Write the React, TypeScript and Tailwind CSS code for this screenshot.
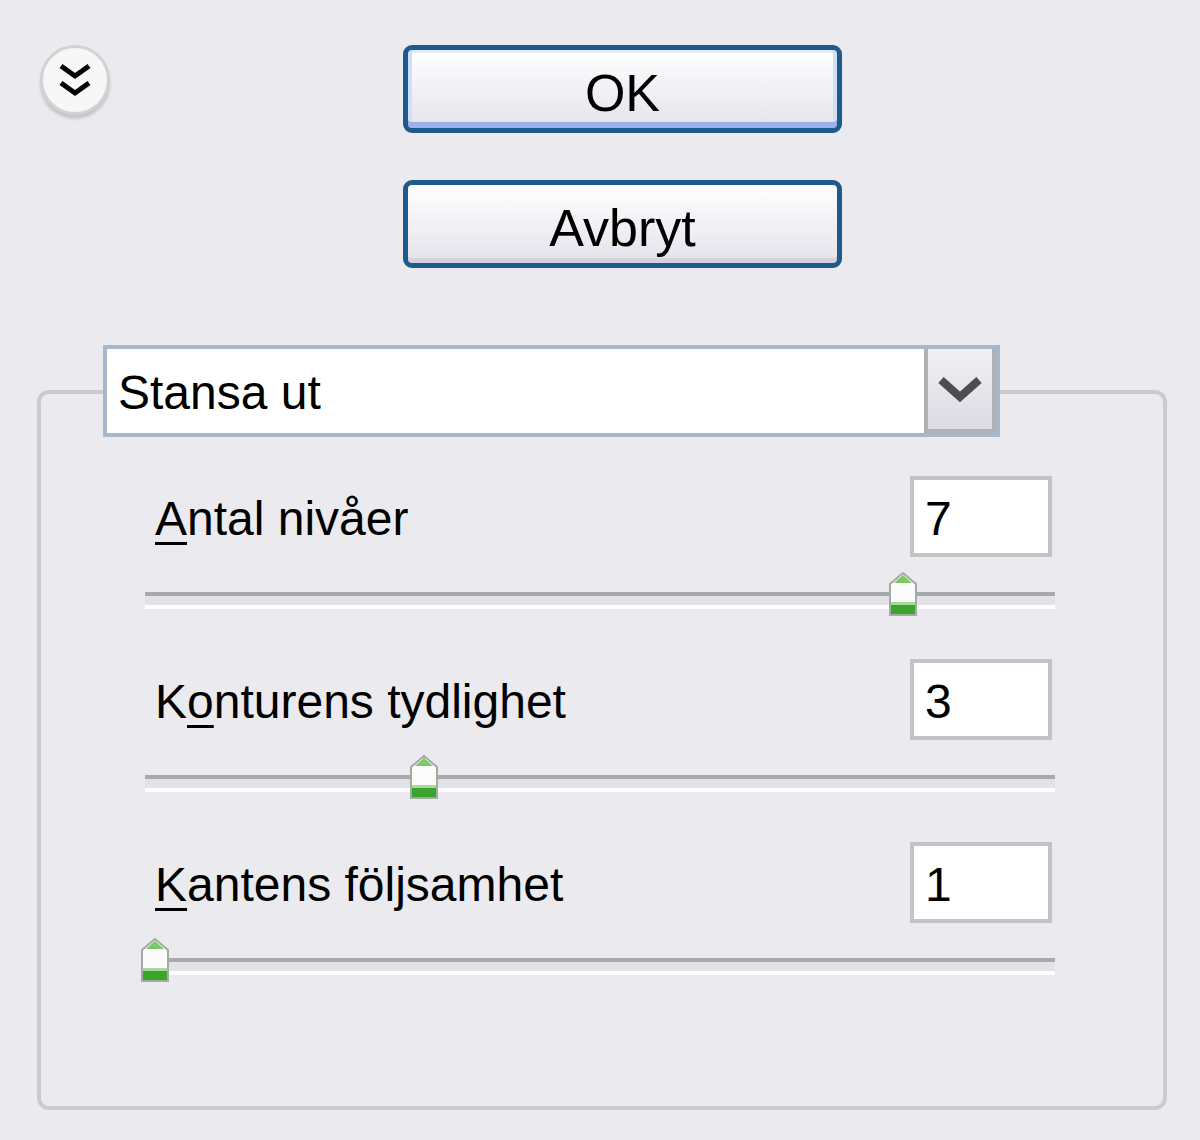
import React from "react";

type Row = {
  label: string;
  hot: number;
  value: number;
  frac: number;
};

const rows: Row[] = [
  { label: "Antal nivåer", hot: 0, value: 7, frac: 5 / 6 },
  { label: "Konturens tydlighet", hot: 1, value: 3, frac: 0.3 },
  { label: "Kantens följsamhet", hot: 0, value: 1, frac: 0 },
];

function Thumb() {
  return (
    <svg width="30" height="45" viewBox="0 0 30 45">
      <path d="M15 1 L28 12 V43 H2 V12 Z" fill="#fbfbfb" stroke="#a3aca3" strokeWidth="2" />
      <path d="M15 3 L24 11 H6 Z" fill="#7cc766" />
      <rect x="3" y="33" width="24" height="9" fill="#3aa52a" />
      <rect x="3" y="30" width="24" height="3" fill="#a6d99a" />
    </svg>
  );
}

function SliderRow({ row }: { row: Row }) {
  const { label, hot, value, frac } = row;
  return (
    <div className="h-[183px]">
      <div className="ml-[114px] w-[897px] h-[81px] flex justify-between">
        <span className="pt-[2px] leading-[81px] text-[48px] text-black">
          {label.slice(0, hot)}
          <span className="underline decoration-[3px] underline-offset-[7px]">{label[hot]}</span>
          {label.slice(hot + 1)}
        </span>
        <div className="w-[142px] h-[81px] bg-white border-4 border-[#c3c3c7] pl-[11px] pt-[2px] leading-[73px] text-[48px] text-black">
          {value}
        </div>
      </div>
      <div className="relative ml-[104px] w-[910px] mt-[35px] h-[17px]">
        <div className="h-[4px] bg-[#a9a9ad]" />
        <div className="h-[9px] bg-[#e3e3e7]" />
        <div className="h-[4px] bg-white" />
        <div className="absolute top-[-20px]" style={{ left: 10 + frac * 898 - 15 }}>
          <Thumb />
        </div>
      </div>
    </div>
  );
}

function DialogButton({ text, isDefault }: { text: string; isDefault?: boolean }) {
  return (
    <button
      className={
        isDefault
          ? "w-[439px] h-[88px] rounded-[9px] border-[5px] border-[#1f5a8c] bg-gradient-to-b from-white to-[#e4e3ec] shadow-[inset_0_-6px_0_#9eb0ea,inset_4px_0_0_#cfe0f7,inset_-4px_0_0_#cfe0f7,inset_0_3px_0_#e2ecf9] pt-[8px] leading-[70px] text-[52px] text-black"
          : "w-[439px] h-[88px] rounded-[9px] border-[5px] border-[#1f5a8c] bg-gradient-to-b from-white to-[#e4e3ec] shadow-[inset_0_-5px_0_#d4d3dd] pt-[8px] leading-[70px] text-[52px] text-black"
      }
    >
      {text}
    </button>
  );
}

export default function App() {
  return (
    <div className="w-[1200px] h-[1140px] bg-[#ebeaee] pt-[45px] font-['Liberation_Sans',Arial,sans-serif] overflow-hidden">
      <div className="flex items-start">
        <div className="ml-[40px] w-[70px] h-[70px] rounded-full bg-[#f7f7f8] border-[3px] border-[#d2d2d6] shadow-[0_4px_3px_#c6c6ca] flex items-center justify-center">
          <svg width="40" height="44" viewBox="0 0 40 44">
            <path d="M6 8 L20 18 L34 8" fill="none" stroke="#000" strokeWidth="5" />
            <path d="M6 25 L20 35 L34 25" fill="none" stroke="#000" strokeWidth="5" />
          </svg>
        </div>
        <div className="ml-[293px] flex flex-col gap-[47px]">
          <DialogButton text="OK" isDefault />
          <DialogButton text="Avbryt" />
        </div>
      </div>

      <div className="ml-[37px] mt-[122px] w-[1130px] h-[720px] border-4 border-[#cbcbcf] rounded-[12px]">
        <div className="ml-[62px] mt-[-49px] w-[897px] h-[92px] border-4 border-[#a9b7ca] bg-white flex">
          <span className="flex-1 pl-[11px] pt-[3px] leading-[81px] text-[48px] text-black">Stansa ut</span>
          <div className="w-[72px] h-[84px] border-l-4 border-r-4 border-b-4 border-[#b0b0b7] bg-gradient-to-b from-[#f1f0f5] to-[#dcdbe3] flex items-center justify-center">
            <svg width="46" height="30" viewBox="0 0 46 30">
              <path d="M4 6 L23 23 L42 6" fill="none" stroke="#4d4d4f" strokeWidth="8" />
            </svg>
          </div>
        </div>
        <div className="mt-[39px]">
          {rows.map((row, idx) => (
            <SliderRow key={idx} row={row} />
          ))}
        </div>
      </div>
    </div>
  );
}
